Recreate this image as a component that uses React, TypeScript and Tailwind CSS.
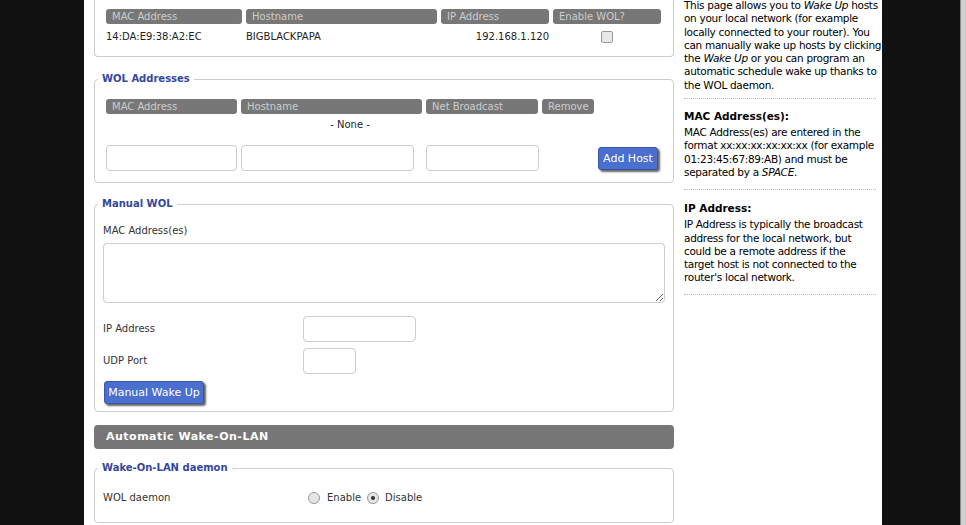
import React from "react";

const font = { fontFamily: '"DejaVu Sans", Verdana, sans-serif' };

const HeadCell = ({ w, children }: { w: string; children: React.ReactNode }) => (
  <div className={`${w} h-[15px] rounded-[3px] bg-[#777] text-[#ccc] text-[10px] leading-[15px] pl-[6px] whitespace-nowrap`}>
    {children}
  </div>
);

const Legend = ({ children }: { children: React.ReactNode }) => (
  <legend className="ml-[1px] px-[4px] text-[10px] font-bold leading-[16px] text-[#34479b]">{children}</legend>
);

const BlueButton = ({ children, className = "" }: { children: React.ReactNode; className?: string }) => (
  <button className={`h-[23px] rounded-[3px] border border-[#3a56a8] bg-[#4b6fcf] text-white text-[11px] leading-[21px] shadow-[2px_2px_2px_#666] ${className}`}>
    {children}
  </button>
);

const TextInput = ({ w }: { w: string }) => (
  <input type="text" className={`${w} h-[26px] rounded-[4px] border border-[#ccc] bg-white`} />
);

const Radio = ({ checked }: { checked?: boolean }) => (
  <span className="w-[12px] h-[12px] rounded-full border border-[#999] bg-[#e6e6e6] flex items-center justify-center">
    {checked && <span className="w-[4px] h-[4px] rounded-full bg-[#333]" />}
  </span>
);

function MainColumn() {
  return (
    <div className="w-[580px] shrink-0 text-[10px] text-[#222]">
      {/* known hosts (scrolled) */}
      <div className="border-x border-b border-[#ccc] rounded-b-[4px] pl-[11px] pt-[9px] pb-[12px]">
        <div className="flex gap-[4px]">
          <HeadCell w="w-[136px]">MAC Address</HeadCell>
          <HeadCell w="w-[191px]">Hostname</HeadCell>
          <HeadCell w="w-[108px]">IP Address</HeadCell>
          <HeadCell w="w-[108px]">Enable WOL?</HeadCell>
        </div>
        <div className="flex gap-[4px] mt-[6px] leading-[14px]">
          <div className="w-[136px]">14:DA:E9:38:A2:EC</div>
          <div className="w-[191px]">BIGBLACKPAPA</div>
          <div className="w-[108px] text-right">192.168.1.120</div>
          <div className="w-[108px] flex justify-center items-center">
            <span className="w-[12px] h-[12px] rounded-[2px] border border-[#999] bg-[#e8e8e8]" />
          </div>
        </div>
      </div>

      <fieldset className="mt-[14px] border border-[#ccc] rounded-[4px] px-[2px] pb-[11px]">
        <Legend>WOL Addresses</Legend>
        <div className="pl-[9px] pt-[12px]">
          <div className="flex gap-[4px]">
            <HeadCell w="w-[131px]">MAC Address</HeadCell>
            <HeadCell w="w-[181px]">Hostname</HeadCell>
            <HeadCell w="w-[112px]">Net Broadcast</HeadCell>
            <HeadCell w="w-[52px]">Remove</HeadCell>
          </div>
          <div className="w-[488px] text-center leading-[14px] mt-[4px]">- None -</div>
          <div className="flex items-start mt-[13px]">
            <TextInput w="w-[131px]" />
            <div className="ml-[4px]"><TextInput w="w-[173px]" /></div>
            <div className="ml-[12px]"><TextInput w="w-[113px]" /></div>
            <BlueButton className="ml-[59px] mt-[2px] w-[60px]">Add Host</BlueButton>
          </div>
        </div>
      </fieldset>

      <fieldset className="mt-[13px] border border-[#ccc] rounded-[4px] px-[2px] pb-[7px]">
        <Legend>Manual WOL</Legend>
        <div className="pl-[6px] pt-[12px]">
          <div className="leading-[14px] text-[#333]">MAC Address(es)</div>
          <textarea className="block mt-[5px] w-[562px] h-[60px] rounded-[4px] border border-[#ccc] bg-white" />
          <div className="flex items-center mt-[13px]">
            <div className="w-[200px] text-[#333] -mt-[2px]">IP Address</div>
            <TextInput w="w-[113px]" />
          </div>
          <div className="flex items-center mt-[6px]">
            <div className="w-[200px] text-[#333] -mt-[2px]">UDP Port</div>
            <TextInput w="w-[53px]" />
          </div>
          <BlueButton className="mt-[7px] ml-[1px] w-[100px]">Manual Wake Up</BlueButton>
        </div>
      </fieldset>

      <div className="mt-[13px] h-[24px] rounded-[4px] bg-[#777] pl-[12px] text-white text-[11px] font-bold tracking-[0.5px] leading-[24px]">
        Automatic Wake-On-LAN
      </div>

      <fieldset className="mt-[11px] border border-[#ccc] rounded-[4px] px-[2px] pb-[17px]">
        <Legend>Wake-On-LAN daemon</Legend>
        <div className="pl-[6px] pt-[15px] flex items-center leading-[14px] text-[#333]">
          <div className="w-[205px]">WOL daemon</div>
          <Radio />
          <span className="ml-[7px]">Enable</span>
          <span className="ml-[6px]"><Radio checked /></span>
          <span className="ml-[6px]">Disable</span>
        </div>
      </fieldset>
    </div>
  );
}

function Sidebar() {
  return (
    <div className="w-[192px] shrink-0 -mt-[1px] text-[10.5px] tracking-[-0.3px] leading-[13.3px] text-black whitespace-nowrap">
      <div className="border-b border-dotted border-[#bbb] pb-[6px]">
        This page allows you to <i>Wake Up</i> hosts<br />
        on your local network (for example<br />
        locally connected to your router). You<br />
        can manually wake up hosts by clicking<br />
        the <i>Wake Up</i> or you can program an<br />
        automatic schedule wake up thanks to<br />
        the WOL daemon.
      </div>
      <div className="border-b border-dotted border-[#bbb] pt-[10px] pb-[10px]">
        <div className="font-bold text-[10.5px] tracking-normal leading-[14px]">MAC Address(es):</div>
        <div className="mt-[3px]">
          MAC Address(es) are entered in the<br />
          format xx:xx:xx:xx:xx:xx (for example<br />
          01:23:45:67:89:AB) and must be<br />
          separated by a <i>SPACE</i>.
        </div>
      </div>
      <div className="border-b border-dotted border-[#bbb] pt-[11px] pb-[9px]">
        <div className="font-bold text-[10.5px] tracking-normal leading-[14px]">IP Address:</div>
        <div className="mt-[3px]">
          IP Address is typically the broadcast<br />
          address for the local network, but<br />
          could be a remote address if the<br />
          target host is not connected to the<br />
          router's local network.
        </div>
      </div>
    </div>
  );
}

export default function App() {
  return (
    <div className="w-[966px] h-[525px] overflow-hidden flex bg-[#111]" style={font}>
      <div className="w-[84px] shrink-0" />
      <div className="w-[798px] shrink-0 bg-white flex gap-[10px] pl-[10px]">
        <MainColumn />
        <Sidebar />
      </div>
      <div className="w-[78px] shrink-0" />
      <div className="w-[6px] shrink-0 border-l border-[#888] bg-[#cfcfcf]" />
    </div>
  );
}
